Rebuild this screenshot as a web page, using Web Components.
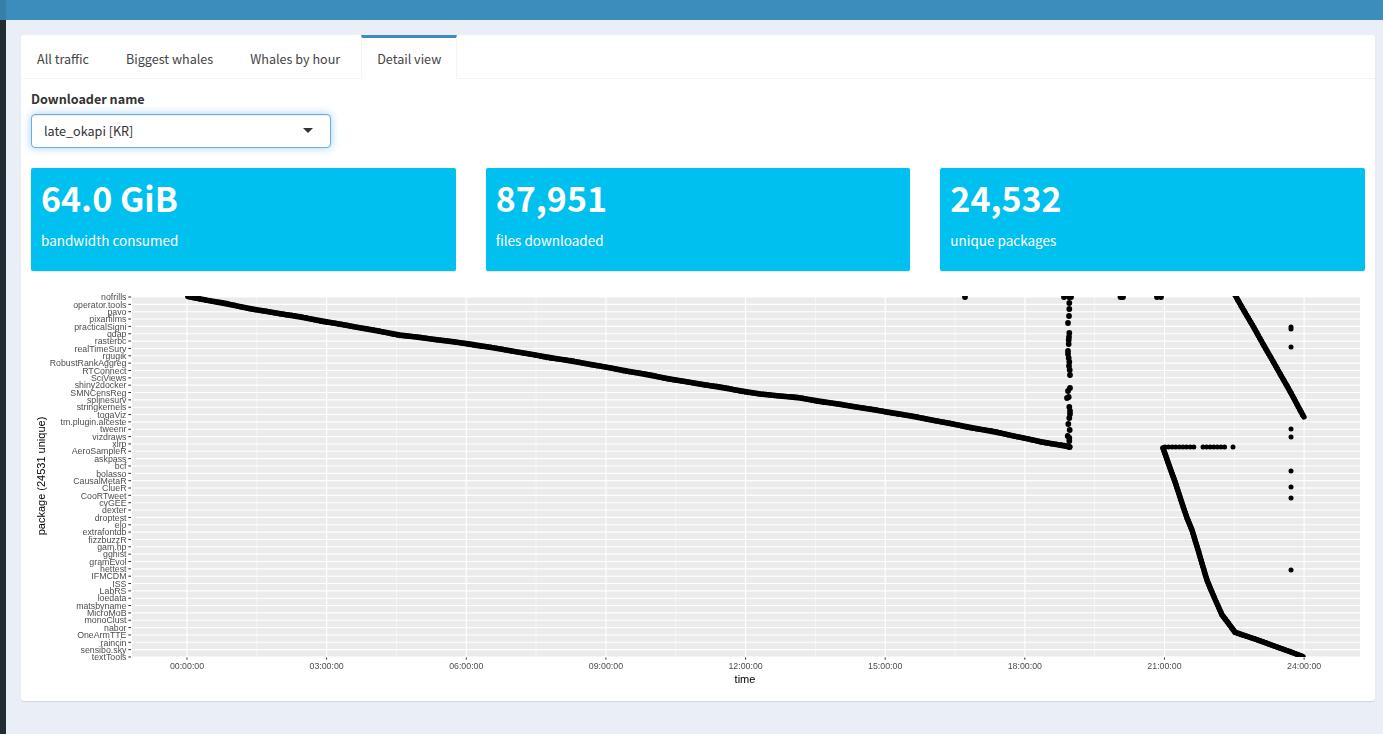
<!DOCTYPE html>
<html lang="en">
<head>
<meta charset="utf-8">
<title>Detail view</title>
<style>
  html, body { margin: 0; height: 100%; overflow: hidden; }
  body { font-family: "Noto Sans CJK SC", "Noto Sans", sans-serif; color: #333; }
</style>
</head>
<body>
<app-shell>
  <tab-card>
    <tab-item>All traffic</tab-item>
    <tab-item>Biggest whales</tab-item>
    <tab-item>Whales by hour</tab-item>
    <tab-item active>Detail view</tab-item>
    <div slot="body">
      <select-input label="Downloader name" value="late_okapi [KR]"></select-input>
      <value-row>
        <value-box value="64.0 GiB" caption="bandwidth consumed"></value-box>
        <value-box value="87,951" caption="files downloaded"></value-box>
        <value-box value="24,532" caption="unique packages"></value-box>
      </value-row>
      <package-plot></package-plot>
    </div>
  </tab-card>
</app-shell>

<script>
const shellTemplate = document.createElement('template');
shellTemplate.innerHTML = `
  <style>
    :host { display: grid; grid-template: 20px 1fr / 6px 1fr; height: 734px; background: #eaeef7; }
    .logo { background: #367fa9; }
    .navbar { background: #3c8dbc; }
    .sidebar { background: #222d32; }
    .content { padding: 15px 8px 0 15px; min-width: 0; }
  </style>
  <div class="logo"></div>
  <div class="navbar"></div>
  <div class="sidebar"></div>
  <div class="content"><slot></slot></div>
`;

class AppShell extends HTMLElement {
  connectedCallback() {
    if (this.shadowRoot) return;
    this.attachShadow({ mode: 'open' }).appendChild(shellTemplate.content.cloneNode(true));
  }
}

const cardTemplate = document.createElement('template');
cardTemplate.innerHTML = `
  <style>
    :host { display: block; background: #fff; border-radius: 3px; box-shadow: 0 1px 1px rgba(0,0,0,.1); }
    .tabs { display: flex; height: 43px; border-bottom: 1px solid #f4f4f4; box-sizing: content-box; }
    .body { padding: 10px; }
  </style>
  <div class="tabs"><slot></slot></div>
  <div class="body"><slot name="body"></slot></div>
`;

class TabCard extends HTMLElement {
  connectedCallback() {
    if (this.shadowRoot) return;
    this.attachShadow({ mode: 'open' }).appendChild(cardTemplate.content.cloneNode(true));
  }
}

const tabTemplate = document.createElement('template');
tabTemplate.innerHTML = `
  <style>
    :host { display: block; box-sizing: border-box; height: 44px; margin-right: 5px; padding: 0 15px;
      border: 1px solid transparent; border-top: 3px solid transparent; border-bottom: 0;
      font-size: 12.6px; line-height: 42px; color: #444; }
    :host([active]) { border-color: #f4f4f4; border-top-color: #3c8dbc; background: #fff; }
  </style>
  <slot></slot>
`;

class TabItem extends HTMLElement {
  connectedCallback() {
    if (this.shadowRoot) return;
    this.attachShadow({ mode: 'open' }).appendChild(tabTemplate.content.cloneNode(true));
  }
}

const selectTemplate = document.createElement('template');
selectTemplate.innerHTML = `
  <style>
    :host { display: block; width: 300px; }
    label { display: block; font-size: 12.6px; font-weight: 700; line-height: 20px; color: #333; margin-bottom: 5px; }
    .box { display: flex; align-items: center; justify-content: space-between; box-sizing: border-box; height: 34px;
      padding: 0 17px 1px 12px; background: #fff; border: 1px solid #66afe9; border-radius: 4px;
      box-shadow: inset 0 1px 1px rgba(0,0,0,.075), 0 0 8px rgba(102,175,233,.6);
      font-size: 12.6px; color: #333; }
    .caret { width: 0; height: 0; border: 5px solid transparent; border-top-color: #333; border-bottom: 0; margin-top: -1px; }
  </style>
  <label id="label"></label>
  <div class="box"><span id="value"></span><span class="caret"></span></div>
`;

class SelectInput extends HTMLElement {
  connectedCallback() {
    if (this.shadowRoot) return;
    this.attachShadow({ mode: 'open' }).appendChild(selectTemplate.content.cloneNode(true));
    this.shadowRoot.getElementById('label').textContent = this.getAttribute('label');
    this.shadowRoot.getElementById('value').textContent = this.getAttribute('value');
  }
}

const rowTemplate = document.createElement('template');
rowTemplate.innerHTML = `
  <style>
    :host { display: grid; grid-template-columns: repeat(3, 1fr); gap: 30px; margin-top: 20px; }
  </style>
  <slot></slot>
`;

class ValueRow extends HTMLElement {
  connectedCallback() {
    if (this.shadowRoot) return;
    this.attachShadow({ mode: 'open' }).appendChild(rowTemplate.content.cloneNode(true));
  }
}

const valueTemplate = document.createElement('template');
valueTemplate.innerHTML = `
  <style>
    :host { display: block; box-sizing: border-box; height: 103px; padding: 9px 10px 10px; background: #00c0ef;
      border-radius: 2px; color: #fff; box-shadow: 0 1px 1px rgba(0,0,0,.1); }
    .value { font-size: 34px; font-weight: 700; line-height: 42px; white-space: nowrap; }
    .caption { margin-top: 11px; font-size: 13.5px; line-height: 21px; }
  </style>
  <div class="value" id="value"></div>
  <div class="caption" id="caption"></div>
`;

class ValueBox extends HTMLElement {
  connectedCallback() {
    if (this.shadowRoot) return;
    this.attachShadow({ mode: 'open' }).appendChild(valueTemplate.content.cloneNode(true));
    this.shadowRoot.getElementById('value').textContent = this.getAttribute('value');
    this.shadowRoot.getElementById('caption').textContent = this.getAttribute('caption');
  }
}

const packages = ['nofrills', 'operator.tools', 'pavo', 'pixarfilms', 'practicalSigni', 'qdap', 'rasterbc',
  'realTimeSurv', 'rgugik', 'RobustRankAggreg', 'RTConnect', 'SciViews', 'shiny2docker', 'SMNCensReg',
  'splinesurv', 'stringkernels', 'togaViz', 'tm.plugin.alceste', 'tweenr', 'vizdraws', 'xlrp', 'AeroSampleR',
  'askpass', 'bcf', 'bolasso', 'CausalMetaR', 'ClueR', 'CooRTweet', 'cvGEE', 'dexter', 'droptest', 'elo',
  'extrafontdb', 'fizzbuzzR', 'gam.hp', 'gghist', 'gramEvol', 'hettest', 'IFMCDM', 'ISS', 'LabRS', 'loedata',
  'matsbyname', 'MicroMoB', 'monoClust', 'nabor', 'OneArmTTE', 'raincin', 'sensibo.sky', 'textTools'];

const hours = ['00:00:00', '03:00:00', '06:00:00', '09:00:00', '12:00:00', '15:00:00', '18:00:00', '21:00:00', '24:00:00'];

// traced from the picture, in page pixels
const runs = [
  [[188, 296.5], [258, 310], [300, 317], [400, 335], [470, 344], [600, 366], [670, 379], [760, 394], [800, 398], [900, 414], [1000, 433], [1040, 441.5], [1070, 447]],
  [[1235, 295], [1270, 356], [1287, 386], [1304, 417]],
  [[1163, 448], [1175, 482], [1187, 518], [1192, 530], [1207, 580], [1211, 590], [1222, 615], [1235, 632], [1277, 647], [1303, 656.5]]
];

const dots = [[965, 297], [1064, 297], [1069, 297], [1071, 297], [1120.5, 297], [1123, 297], [1157, 297], [1161, 297],
  [1069.3, 303], [1069.3, 309], [1069, 316], [1068, 323], [1069.3, 333], [1069, 337], [1068.7, 340], [1068.7, 344],
  [1068, 351], [1068, 354], [1068.7, 358], [1069.3, 362], [1069, 366], [1069.7, 370], [1070, 375], [1070, 388],
  [1068, 391], [1068.7, 397], [1067, 398], [1069.3, 407], [1070, 411], [1070, 414], [1069.3, 418], [1068.3, 424], [1069.7, 430],
  [1067.7, 436], [1069.3, 438], [1069.3, 441], [1069.3, 447]];

const strays = [[1291, 327], [1291, 329], [1291, 347], [1291, 429], [1291, 437], [1291, 471], [1291, 487], [1291, 498], [1291, 570], [1233, 447]];

// the row of separate hits at 21:00
for (let x = 1165; x < 1196; x += 3.6) strays.push([x, 447]);
for (let x = 1203; x < 1226; x += 3.6) strays.push([x, 447]);

// overplotted hits make the edges of the long runs a little rough
function roughen(run) {
  const points = [];
  for (let i = 1; i < run.length; i++) {
    const [x0, y0] = run[i - 1];
    const [x1, y1] = run[i];
    const steps = Math.ceil(Math.hypot(x1 - x0, y1 - y0) / 3);
    for (let s = 0; s < steps; s++) {
      const t = s / steps;
      const wobble = Math.sin(points.length * 0.37) * Math.sin(points.length * 0.11) * 0.55;
      points.push([x0 + (x1 - x0) * t, y0 + (y1 - y0) * t + wobble]);
    }
  }
  return points;
}

const PANEL = { left: 132, right: 1360, top: 297, bottom: 657 };
const rowY = (i) => PANEL.top + i * (PANEL.bottom - PANEL.top) / 49;
const tickX = (i) => 187 + i * 139.64;

const plotTemplate = document.createElement('template');
plotTemplate.innerHTML = `
  <style>
    :host { display: block; margin-top: 15px; height: 405px; }
    svg { display: block; width: 100%; height: 100%; filter: blur(0.4px); }
    text { font-family: "Liberation Sans", Arial, sans-serif; }
    .tick { font-size: 8.8px; fill: #4d4d4d; }
    .title { font-size: 11px; fill: #000; }
    .run { fill: none; stroke: #000; stroke-width: 5.4; stroke-linejoin: round; stroke-linecap: round; }
  </style>
  <svg id="plot" viewBox="31 286 1334 405" xmlns="http://www.w3.org/2000/svg"></svg>
`;

class PackagePlot extends HTMLElement {
  connectedCallback() {
    if (this.shadowRoot) return;
    this.attachShadow({ mode: 'open' }).appendChild(plotTemplate.content.cloneNode(true));
    this.shadowRoot.getElementById('plot').innerHTML = this.render();
  }

  render() {
    const { left, right, top, bottom } = PANEL;
    let out = `<defs><clipPath id="panel"><rect x="${left}" y="${top - 1}" width="${right - left}" height="${bottom - top + 1}"/></clipPath></defs>`;
    out += `<rect x="${left}" y="${top}" width="${right - left}" height="${bottom - top}" fill="#ebebeb"/>`;

    for (let i = 0; i < hours.length - 1; i++) {
      const x = tickX(i + 0.5);
      out += `<line x1="${x}" x2="${x}" y1="${top}" y2="${bottom}" stroke="#fff" stroke-width=".55"/>`;
    }
    hours.forEach((hour, i) => {
      const x = tickX(i);
      out += `<line x1="${x}" x2="${x}" y1="${top}" y2="${bottom}" stroke="#fff" stroke-width="1.1"/>`;
      out += `<line x1="${x}" x2="${x}" y1="${bottom}" y2="${bottom + 2.7}" stroke="#333" stroke-width="1"/>`;
      out += `<text class="tick" x="${x}" y="${bottom + 12}" text-anchor="middle">${hour}</text>`;
    });
    packages.forEach((name, i) => {
      const y = rowY(i);
      out += `<line x1="${left}" x2="${right}" y1="${y}" y2="${y}" stroke="#fff" stroke-width="1.1"/>`;
      out += `<line x1="128.3" x2="131" y1="${y}" y2="${y}" stroke="#333" stroke-width="1"/>`;
      out += `<text class="tick" x="126.5" y="${y + 3.2}" text-anchor="end">${name}</text>`;
    });

    out += '<g clip-path="url(#panel)">';
    runs.forEach((run) => {
      out += `<polyline class="run" points="${run.map((p) => p.join(',')).join(' ')}"/>`;
      roughen(run).forEach(([x, y]) => {
        out += `<circle cx="${x.toFixed(1)}" cy="${y.toFixed(1)}" r="2.7" fill="#000"/>`;
      });
    });
    dots.forEach(([x, y]) => {
      out += `<circle cx="${x}" cy="${y}" r="2.9" fill="#000"/>`;
    });
    strays.forEach(([x, y]) => {
      out += `<circle cx="${x}" cy="${y}" r="2.5" fill="#000"/>`;
    });
    out += '</g>';

    out += `<text class="title" x="745" y="683" text-anchor="middle">time</text>`;
    out += `<text class="title" transform="translate(45 476) rotate(-90)" text-anchor="middle">package (24531 unique)</text>`;
    return out;
  }
}

customElements.define('app-shell', AppShell);
customElements.define('tab-card', TabCard);
customElements.define('tab-item', TabItem);
customElements.define('select-input', SelectInput);
customElements.define('value-row', ValueRow);
customElements.define('value-box', ValueBox);
customElements.define('package-plot', PackagePlot);
</script>
</body>
</html>
